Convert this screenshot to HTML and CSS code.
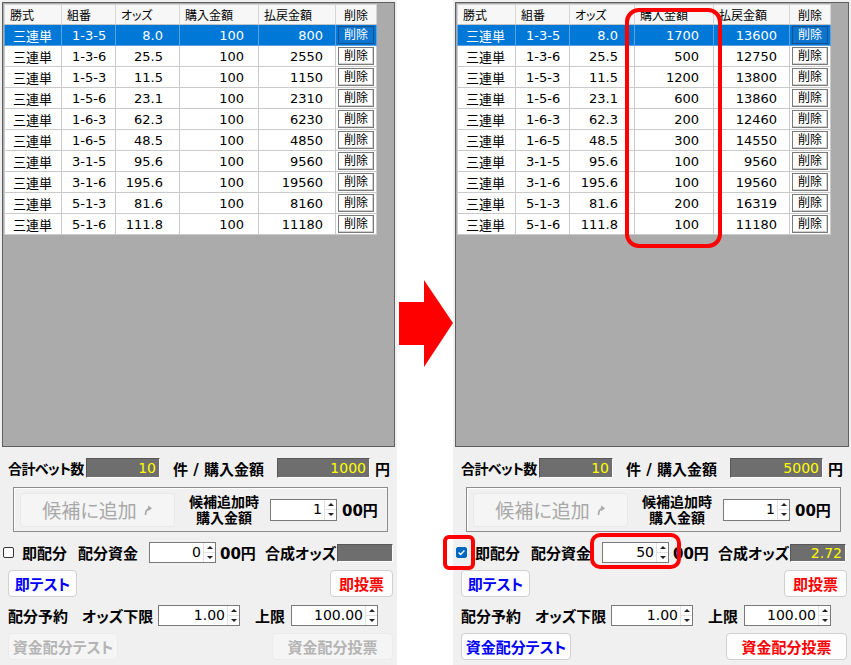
FILE: index.html
```html
<!DOCTYPE html>
<html lang="ja">
<head>
    <meta charset="UTF-8">
    <title>配分設定</title>
    <link rel="stylesheet" href="styles.css">
</head>
<body>
<div class="screen">

    <!-- before -->
    <div class="window">
        <div class="grid">
            <table class="bets">
                <colgroup><col style="width:57px"><col style="width:54px"><col style="width:64px"><col style="width:79px"><col style="width:77px"><col style="width:41px"></colgroup>
                <thead>
                    <tr><th>勝式</th><th>組番</th><th>オッズ</th><th>購入金額</th><th>払戻金額</th><th class="c">削除</th></tr>
                </thead>
                <tbody>
                    <tr class="selected"><td class="kind">三連単</td><td class="combo">1-3-5</td><td class="num odds">8.0</td><td class="num buy">100</td><td class="num pay">800</td><td class="del"><span class="del-btn">削除</span></td></tr>
                    <tr><td class="kind">三連単</td><td class="combo">1-3-6</td><td class="num odds">25.5</td><td class="num buy">100</td><td class="num pay">2550</td><td class="del"><span class="del-btn">削除</span></td></tr>
                    <tr><td class="kind">三連単</td><td class="combo">1-5-3</td><td class="num odds">11.5</td><td class="num buy">100</td><td class="num pay">1150</td><td class="del"><span class="del-btn">削除</span></td></tr>
                    <tr><td class="kind">三連単</td><td class="combo">1-5-6</td><td class="num odds">23.1</td><td class="num buy">100</td><td class="num pay">2310</td><td class="del"><span class="del-btn">削除</span></td></tr>
                    <tr><td class="kind">三連単</td><td class="combo">1-6-3</td><td class="num odds">62.3</td><td class="num buy">100</td><td class="num pay">6230</td><td class="del"><span class="del-btn">削除</span></td></tr>
                    <tr><td class="kind">三連単</td><td class="combo">1-6-5</td><td class="num odds">48.5</td><td class="num buy">100</td><td class="num pay">4850</td><td class="del"><span class="del-btn">削除</span></td></tr>
                    <tr><td class="kind">三連単</td><td class="combo">3-1-5</td><td class="num odds">95.6</td><td class="num buy">100</td><td class="num pay">9560</td><td class="del"><span class="del-btn">削除</span></td></tr>
                    <tr><td class="kind">三連単</td><td class="combo">3-1-6</td><td class="num odds">195.6</td><td class="num buy">100</td><td class="num pay">19560</td><td class="del"><span class="del-btn">削除</span></td></tr>
                    <tr><td class="kind">三連単</td><td class="combo">5-1-3</td><td class="num odds">81.6</td><td class="num buy">100</td><td class="num pay">8160</td><td class="del"><span class="del-btn">削除</span></td></tr>
                    <tr><td class="kind">三連単</td><td class="combo">5-1-6</td><td class="num odds">111.8</td><td class="num buy">100</td><td class="num pay">11180</td><td class="del"><span class="del-btn">削除</span></td></tr>
                </tbody>
            </table>
        </div>

        <div class="panel">
            <div class="row totals">
                <span class="l-count">合計ベット数</span>
                <span class="readout count">10</span>
                <span class="l-mid">件 / 購入金額</span>
                <span class="readout sum">1000</span>
                <span class="yen">円</span>
            </div>
            <div class="group">
                <div class="add-btn">候補に追加 <svg width="10" height="12" viewBox="0 0 10 12"><path d="M2.5 11 C2.5 7 4 5 6.5 4.5" stroke="#a8a8a8" stroke-width="1.7" fill="none"/><path d="M5 1.5 L9 4.3 L5.3 7.2 Z" fill="#a8a8a8"/></svg></div>
                <div class="add-label"><span>候補追加時</span><span>購入金額</span></div>
                <div class="spin s-add"><span class="val">1</span><span class="arrows"><i class="up"></i><i class="down"></i></span></div>
                <span class="unit">00円</span>
            </div>
            <div class="row dist">
                <span class="chk"></span>
                <span class="l-soku">即配分</span>
                <span class="l-fund">配分資金</span>
                <div class="spin s-fund"><span class="val">0</span><span class="arrows"><i class="up"></i><i class="down"></i></span></div>
                <span class="unit u-fund">00円</span>
                <span class="l-odds">合成オッズ</span>
                <span class="readout odds-out"></span>
            </div>
            <div class="btn-row">
                <div class="btn blue b-test">即テスト</div>
                <div class="btn red b-vote">即投票</div>
            </div>
            <div class="row reserve">
                <span class="l-res">配分予約</span>
                <span class="l-low">オッズ下限</span>
                <div class="spin s-low"><span class="val">1.00</span><span class="arrows"><i class="up"></i><i class="down"></i></span></div>
                <span class="l-high">上限</span>
                <div class="spin s-high"><span class="val">100.00</span><span class="arrows"><i class="up"></i><i class="down"></i></span></div>
            </div>
            <div class="btn-row">
                <div class="btn off b-ftest">資金配分テスト</div>
                <div class="btn off b-fvote">資金配分投票</div>
            </div>
        </div>
    </div>

    <div class="gap">
        <svg class="arrow" width="56" height="87" viewBox="0 0 56 87"><polygon points="2,22 27,22 27,0 56,43 27,87 27,65 2,65" fill="#ff0000"/></svg>
    </div>

    <!-- after -->
    <div class="window after">
        <div class="grid">
            <table class="bets">
                <colgroup><col style="width:58px"><col style="width:54px"><col style="width:65px"><col style="width:79px"><col style="width:76px"><col style="width:41px"></colgroup>
                <thead>
                    <tr><th>勝式</th><th>組番</th><th>オッズ</th><th>購入金額</th><th>払戻金額</th><th class="c">削除</th></tr>
                </thead>
                <tbody>
                    <tr class="selected"><td class="kind">三連単</td><td class="combo">1-3-5</td><td class="num odds">8.0</td><td class="num buy">1700</td><td class="num pay">13600</td><td class="del"><span class="del-btn">削除</span></td></tr>
                    <tr><td class="kind">三連単</td><td class="combo">1-3-6</td><td class="num odds">25.5</td><td class="num buy">500</td><td class="num pay">12750</td><td class="del"><span class="del-btn">削除</span></td></tr>
                    <tr><td class="kind">三連単</td><td class="combo">1-5-3</td><td class="num odds">11.5</td><td class="num buy">1200</td><td class="num pay">13800</td><td class="del"><span class="del-btn">削除</span></td></tr>
                    <tr><td class="kind">三連単</td><td class="combo">1-5-6</td><td class="num odds">23.1</td><td class="num buy">600</td><td class="num pay">13860</td><td class="del"><span class="del-btn">削除</span></td></tr>
                    <tr><td class="kind">三連単</td><td class="combo">1-6-3</td><td class="num odds">62.3</td><td class="num buy">200</td><td class="num pay">12460</td><td class="del"><span class="del-btn">削除</span></td></tr>
                    <tr><td class="kind">三連単</td><td class="combo">1-6-5</td><td class="num odds">48.5</td><td class="num buy">300</td><td class="num pay">14550</td><td class="del"><span class="del-btn">削除</span></td></tr>
                    <tr><td class="kind">三連単</td><td class="combo">3-1-5</td><td class="num odds">95.6</td><td class="num buy">100</td><td class="num pay">9560</td><td class="del"><span class="del-btn">削除</span></td></tr>
                    <tr><td class="kind">三連単</td><td class="combo">3-1-6</td><td class="num odds">195.6</td><td class="num buy">100</td><td class="num pay">19560</td><td class="del"><span class="del-btn">削除</span></td></tr>
                    <tr><td class="kind">三連単</td><td class="combo">5-1-3</td><td class="num odds">81.6</td><td class="num buy">200</td><td class="num pay">16319</td><td class="del"><span class="del-btn">削除</span></td></tr>
                    <tr><td class="kind">三連単</td><td class="combo">5-1-6</td><td class="num odds">111.8</td><td class="num buy">100</td><td class="num pay">11180</td><td class="del"><span class="del-btn">削除</span></td></tr>
                </tbody>
            </table>
        </div>

        <div class="panel">
            <div class="row totals">
                <span class="l-count">合計ベット数</span>
                <span class="readout count">10</span>
                <span class="l-mid">件 / 購入金額</span>
                <span class="readout sum">5000</span>
                <span class="yen">円</span>
            </div>
            <div class="group">
                <div class="add-btn">候補に追加 <svg width="10" height="12" viewBox="0 0 10 12"><path d="M2.5 11 C2.5 7 4 5 6.5 4.5" stroke="#a8a8a8" stroke-width="1.7" fill="none"/><path d="M5 1.5 L9 4.3 L5.3 7.2 Z" fill="#a8a8a8"/></svg></div>
                <div class="add-label"><span>候補追加時</span><span>購入金額</span></div>
                <div class="spin s-add"><span class="val">1</span><span class="arrows"><i class="up"></i><i class="down"></i></span></div>
                <span class="unit">00円</span>
            </div>
            <div class="row dist">
                <span class="chk on"><svg width="11" height="11" viewBox="0 0 11 11"><path d="M2.6 5.6 L4.6 7.6 L8.4 3.6" stroke="#fff" stroke-width="1.4" fill="none"/></svg></span>
                <span class="l-soku">即配分</span>
                <span class="l-fund">配分資金</span>
                <div class="spin s-fund"><span class="val">50</span><span class="arrows"><i class="up"></i><i class="down"></i></span></div>
                <span class="unit u-fund">00円</span>
                <span class="l-odds">合成オッズ</span>
                <span class="readout odds-out">2.72</span>
            </div>
            <div class="btn-row">
                <div class="btn blue b-test">即テスト</div>
                <div class="btn red b-vote">即投票</div>
            </div>
            <div class="row reserve">
                <span class="l-res">配分予約</span>
                <span class="l-low">オッズ下限</span>
                <div class="spin s-low"><span class="val">1.00</span><span class="arrows"><i class="up"></i><i class="down"></i></span></div>
                <span class="l-high">上限</span>
                <div class="spin s-high"><span class="val">100.00</span><span class="arrows"><i class="up"></i><i class="down"></i></span></div>
            </div>
            <div class="btn-row">
                <div class="btn blue b-ftest">資金配分テスト</div>
                <div class="btn red b-fvote">資金配分投票</div>
            </div>
        </div>

        <!-- red call-outs -->
        <div class="mark m-col"></div>
        <div class="mark m-chk"></div>
        <div class="mark m-spin"></div>
    </div>

</div>
</body>
</html>
```

FILE: styles.css
```css
/* page */
body {
    margin: 0;
    background: #fff;
    color: #000;
    font-family: "DejaVu Sans", "Noto Sans CJK JP", sans-serif;
    font-feature-settings: "palt";
}

.screen {
    display: flex;
    width: 851px;
    height: 665px;
    overflow: hidden;
}

.window {
    position: relative;
    width: 397px;
    height: 665px;
    background: #f0f0f0;
}

.window.after {
    width: 398px;
}

.gap {
    width: 56px;
}

.arrow {
    display: block;
    margin-top: 280px;
}

/* bet list */
.grid {
    box-sizing: border-box;
    margin: 2px 2px 0;
    height: 445px;
    border: 1px solid #5f5f5f;
    background: #ababab;
    padding: 1px 0 0 1px;
}

.bets {
    border-collapse: collapse;
    table-layout: fixed;
    width: 373px;
    background: #fff;
}

.bets th {
    height: 19px;
    padding: 0 0 0 5px;
    font-size: 12px;
    font-weight: normal;
    text-align: left;
    background: #f7f7f7;
    border: 1px solid #d6d6d6;
    border-bottom-color: #c4c4c4;
    font-family: "Noto Sans CJK JP", sans-serif;
}

.bets th.c {
    text-align: center;
    padding: 0;
}

.bets td {
    height: 20px;
    padding: 0;
    font-size: 13px;
    border: 1px solid #cacaca;
    white-space: nowrap;
}

.kind {
    padding-left: 8px !important;
}

.combo {
    padding-left: 10px !important;
}

.num {
    text-align: right;
}

.odds {
    padding-right: 16px !important;
}

.buy {
    padding-right: 14px !important;
}

.pay {
    padding-right: 12px !important;
}

.del {
    text-align: center;
}

.del-btn {
    display: inline-block;
    box-sizing: border-box;
    width: 36px;
    height: 18px;
    line-height: 16px;
    font-size: 12px;
    vertical-align: middle;
    background: #fff;
    border: 1px solid #7a7a7a;
    box-shadow: inset -1px -1px 0 #d0d0d0;
}

tr.selected td {
    background: #0078d7;
    color: #fff;
    border-color: #5aa2e2;
}

tr.selected .del-btn {
    background: #0a74cf;
    border-color: #17508a;
    box-shadow: none;
    color: #fff;
}

/* lower panel */
.panel {
    font-size: 15px;
    font-weight: bold;
}

.row {
    display: flex;
    align-items: center;
    white-space: nowrap;
}

.totals {
    height: 20px;
    margin-top: 11px;
    padding-left: 8px;
}

.l-count {
    width: 78px;
    font-size: 14px;
    letter-spacing: -0.6px;
}

.l-mid {
    width: 104px;
    margin-left: 13px;
}

.readout {
    box-sizing: border-box;
    display: block;
    height: 20px;
    padding-right: 3px;
    line-height: 19px;
    font-size: 14px;
    font-weight: normal;
    text-align: right;
    color: #ffff00;
    background: #6e6e6e;
    border-top: 1px solid #575757;
    border-left: 1px solid #575757;
    border-bottom: 1px solid #fdfdfd;
    border-right: 1px solid #fdfdfd;
}

.readout.count {
    width: 74px;
}

.readout.sum {
    width: 93px;
}

.yen {
    margin-left: 5px;
}

.group {
    box-sizing: border-box;
    display: flex;
    align-items: center;
    width: 375px;
    height: 45px;
    margin: 9px 0 0 13px;
    border: 1px solid #8c8c8c;
    box-shadow: inset 1px 1px 0 #fff;
}

.add-btn {
    box-sizing: border-box;
    display: flex;
    align-items: center;
    justify-content: center;
    gap: 6px;
    width: 155px;
    height: 34px;
    margin-left: 6px;
    font-size: 19px;
    font-weight: normal;
    color: #a8a8a8;
    background: #f5f5f5;
    border: 1px solid #e8e8e8;
    border-radius: 4px;
}

.add-label {
    display: flex;
    flex-direction: column;
    align-items: center;
    width: 86px;
    margin-left: 6px;
    font-size: 14px;
}

.add-label span {
    height: 16px;
    line-height: 16px;
}

.spin {
    box-sizing: border-box;
    display: flex;
    height: 21px;
    background: #fff;
    border: 1px solid #7a7a7a;
}

.spin .val {
    flex: 1;
    padding-right: 2px;
    line-height: 19px;
    font-size: 14px;
    font-weight: normal;
    text-align: right;
}

.spin .arrows {
    display: flex;
    flex-direction: column;
    width: 11px;
    border-left: 1px solid #e2e2e2;
}

.spin .arrows i {
    flex: 1;
    display: flex;
    align-items: center;
    justify-content: center;
}

.spin .arrows .up {
    border-bottom: 1px solid #e2e2e2;
}

.spin .arrows i::before {
    content: "";
    border-left: 3px solid transparent;
    border-right: 3px solid transparent;
}

.spin .up::before {
    border-bottom: 3px solid #222;
}

.spin .down::before {
    border-top: 3px solid #222;
}

.s-add {
    width: 67px;
    height: 22px;
    margin-left: 3px;
}

.unit {
    margin-left: 5px;
}

.dist {
    height: 21px;
    margin-top: 10px;
}

.chk {
    box-sizing: border-box;
    display: block;
    width: 11px;
    height: 11px;
    margin-left: 3px;
    background: #fff;
    border: 1px solid #333;
    border-radius: 2px;
}

.chk.on {
    background: #0067c0;
    border-color: #0067c0;
}

.chk.on svg {
    display: block;
    margin: -1px;
}

.l-soku {
    width: 47px;
    margin-left: 8px;
}

.l-fund {
    width: 62px;
    margin-left: 9px;
}

.s-fund {
    width: 67px;
    margin-left: 9px;
}

.u-fund {
    width: 33px;
    margin-left: 4px;
}

.l-odds {
    width: 63px;
    margin-left: 12px;
}

.readout.odds-out {
    width: 56px;
    height: 18px;
    line-height: 17px;
    margin-left: 9px;
}

.btn-row {
    display: flex;
    justify-content: space-between;
    height: 27px;
    margin-top: 7px;
    padding: 0 4px 0 8px;
}

.btn {
    box-sizing: border-box;
    display: flex;
    align-items: center;
    justify-content: center;
    height: 27px;
    background: #fdfdfd;
    border: 1px solid #d0d0d0;
    border-radius: 4px;
}

.btn.blue {
    color: #0000ff;
}

.btn.red {
    color: #ff0000;
}

.btn.off {
    color: #b4b4b4;
    background: #f5f5f5;
    border-color: #ebebeb;
}

.b-test {
    width: 69px;
}

.b-vote {
    width: 63px;
}

.b-ftest {
    width: 110px;
}

.b-fvote {
    width: 121px;
}

.reserve {
    height: 21px;
    margin-top: 8px;
    padding-left: 8px;
}

.l-res {
    width: 64px;
}

.l-low {
    width: 68px;
    margin-left: 10px;
}

.s-low {
    width: 82px;
    margin-left: 8px;
}

.l-high {
    width: 30px;
    margin-left: 15px;
}

.s-high {
    width: 87px;
    margin-left: 6px;
}

/* red call-outs */
.mark {
    position: absolute;
    box-sizing: border-box;
    border: 4px solid #ff0000;
}

.m-col {
    left: 172px;
    top: 8px;
    width: 97px;
    height: 240px;
    border-radius: 14px;
}

.m-chk {
    left: -10px;
    top: 535px;
    width: 32px;
    height: 35px;
    border-radius: 6px;
}

.m-spin {
    left: 137px;
    top: 533px;
    width: 91px;
    height: 36px;
    border-radius: 10px;
}
```
